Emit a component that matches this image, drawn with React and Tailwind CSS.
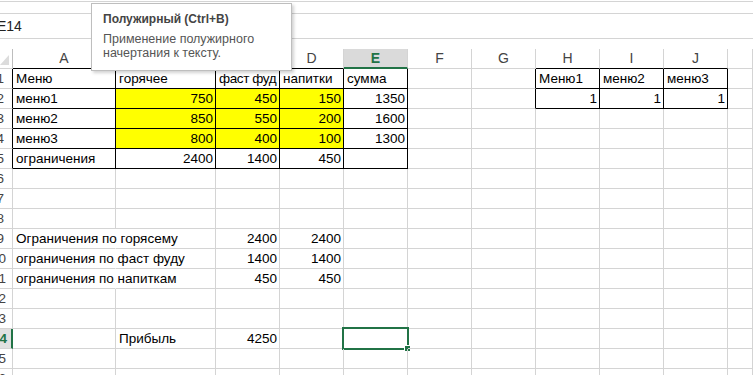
import React from "react";

const COLS = ["A", "B", "C", "D", "E", "F", "G", "H", "I", "J", ""];

// cell values by row, keyed by column index
const DATA = {
	1: { 0: "Меню", 1: "горячее", 2: "фаст фуд", 3: "напитки", 4: "сумма", 7: "Меню1", 8: "меню2", 9: "меню3" },
	2: { 0: "меню1", 1: 750, 2: 450, 3: 150, 4: 1350, 7: 1, 8: 1, 9: 1 },
	3: { 0: "меню2", 1: 850, 2: 550, 3: 200, 4: 1600 },
	4: { 0: "меню3", 1: 800, 2: 400, 3: 100, 4: 1300 },
	5: { 0: "ограничения", 1: 2400, 2: 1400, 3: 450 },
	9: { 0: "Ограничения по горясему", 2: 2400, 3: 2400 },
	10: { 0: "ограничения по фаст фуду", 2: 1400, 3: 1400 },
	11: { 0: "ограничения по напиткам", 2: 450, 3: 450 },
	14: { 1: "Прибыль", 2: 4250 },
};

const ROWS = Array.from({ length: 16 }, (_, i) => i + 1);

function inTable(r, c) {
	return (r >= 1 && r <= 5 && c >= 0 && c <= 4) || (r >= 1 && r <= 2 && c >= 7 && c <= 9);
}

function Cell({ r, c }) {
	const v = DATA[r]?.[c];
	const yellow = r >= 2 && r <= 4 && c >= 1 && c <= 3;
	const spill = r >= 9 && r <= 11 && c === 0;
	const black = inTable(r, c);
	// the cell left of a bordered table draws its left edge
	const blackRight = black || (r >= 1 && r <= 2 && c === 6);
	const selected = r === 14 && c === 4;

	let cls = "relative box-border h-[20px] border-b border-r px-[3px] leading-[19px] whitespace-nowrap";
	cls += black ? " border-b-black" : " border-b-[#d4d4d4]";
	cls += spill ? " border-r-transparent overflow-visible z-10" : blackRight ? " border-r-black" : " border-r-[#d4d4d4]";
	if (yellow) cls += " bg-[#ffff00]";
	if (typeof v === "number") cls += " text-right pr-[2px]";
	if (r === 1 && c === 2) cls += " tracking-[-0.4px]";

	return (
		<div className={cls}>
			{v}
			{selected && (
				<>
					<div className="absolute left-[-2px] top-[-2px] h-[23px] w-[67px] border-2 border-[#217346]" />
					<div className="absolute bottom-[-4px] right-[-4px] h-[7px] w-[7px] border border-white bg-[#217346]" />
				</>
			)}
		</div>
	);
}

function RowHeader({ r }) {
	const active = r === 14;
	const blackRight = r >= 1 && r <= 5;
	let cls = "box-border flex h-[20px] justify-end overflow-hidden border-b border-b-[#d4d4d4] leading-[19px] text-[#444]";
	if (active) cls += " border-r-2 border-r-[#217346] bg-[#e1e1e1] font-bold text-[#217346] pr-[4px]";
	else {
		cls += r >= 10 ? " pr-[6px]" : " pr-[8px]";
		cls += blackRight ? " border-r border-r-black" : " border-r border-r-[#d4d4d4]";
	}
	return (
		<div className={cls}>
			<span className="shrink-0">{r}</span>
		</div>
	);
}

export default function App() {
	return (
		<div
			className="relative h-[375px] w-[753px] overflow-hidden bg-white text-[13.5px] text-black"
			style={{ fontFamily: '"Liberation Sans", Arial, sans-serif' }}
		>
			{/* ribbon edge + formula bar */}
			<div className="h-[1px]" />
			<div className="h-[12px] border-t border-[#d4d4d4]" />
			<div className="flex h-[26px] items-center border-y border-[#d4d4d4]">
				<span className="ml-[-3px] text-[14px] text-[#222]">E14</span>
			</div>
			<div className="h-[10px]" />

			<div className="grid grid-cols-[13px_103px_100px_64px_64px_64px_64px_64px_64px_64px_64px_1fr]">
				{/* column headers */}
				<div className="relative box-border h-[20px] border-b border-r border-b-[#d4d4d4] border-r-[#bdbdbd]">
					<svg className="absolute left-0 top-[6px]" width="10" height="11" viewBox="0 0 10 11">
						<polygon points="9,0 9,10 0,10" fill="#dcdcdc" />
					</svg>
				</div>
				{COLS.map((col, c) => {
					const sel = c === 4;
					let cls = "box-border h-[20px] border-r border-r-[#d4d4d4] text-center text-[14px] leading-[19px]";
					if (sel) cls += " border-b-2 border-b-[#217346] bg-[#dadada] font-bold text-[#217346]";
					else if (c <= 3 || (c >= 7 && c <= 9)) cls += " border-b border-b-black text-[#444]";
					else cls += " border-b border-b-[#d4d4d4] text-[#444]";
					return (
						<div key={c} className={cls}>
							{col}
						</div>
					);
				})}

				{ROWS.map((r) => (
					<React.Fragment key={r}>
						<RowHeader r={r} />
						{COLS.map((_, c) => (
							<Cell key={c} r={r} c={c} />
						))}
					</React.Fragment>
				))}
			</div>

			{/* tooltip over the sheet */}
			<div className="absolute left-[91px] top-[3px] z-20 h-[68px] w-[201px] border border-[#bebebe] bg-white pl-[11px] pt-[6px] shadow-[2px_2px_3px_rgba(0,0,0,0.18)]">
				<div className="text-[12px] font-bold leading-[18px] text-[#444]">Полужирный (Ctrl+B)</div>
				<div className="mt-[4px] text-[12.5px] leading-[14px] text-[#555]">
					Применение полужирного
					<br />
					начертания к тексту.
				</div>
			</div>
		</div>
	);
}
